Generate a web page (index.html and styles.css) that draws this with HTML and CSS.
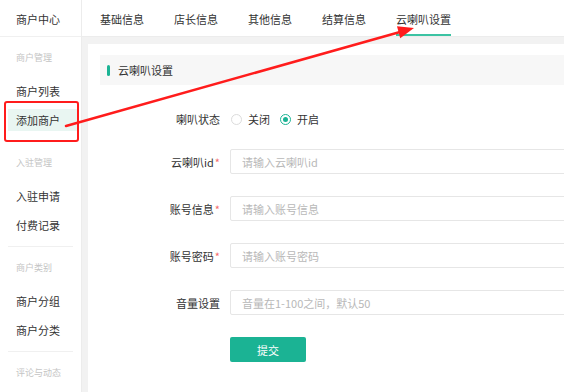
FILE: index.html
```html
<!DOCTYPE html>
<html lang="zh-CN">
<head>
    <meta charset="UTF-8">
    <meta name="viewport" content="width=device-width, initial-scale=1.0">
    <title>云喇叭设置</title>
    <link rel="stylesheet" href="styles.css">
</head>
<body>
    <div class="page">
        <aside class="sidebar">
            <div class="side-head">商户中心</div>

            <div class="side-group">
                <div class="group-title">商户管理</div>
                <a href="#" class="side-item">商户列表</a>
                <a href="#" class="side-item active">添加商户</a>
            </div>

            <div class="side-group">
                <div class="group-title">入驻管理</div>
                <a href="#" class="side-item">入驻申请</a>
                <a href="#" class="side-item">付费记录</a>
            </div>

            <div class="side-group">
                <div class="group-title">商户类别</div>
                <a href="#" class="side-item">商户分组</a>
                <a href="#" class="side-item">商户分类</a>
            </div>

            <div class="side-group last">
                <div class="group-title">评论与动态</div>
            </div>
        </aside>

        <main class="main">
            <nav class="tabs">
                <a href="#" class="tab">基础信息</a>
                <a href="#" class="tab">店长信息</a>
                <a href="#" class="tab">其他信息</a>
                <a href="#" class="tab">结算信息</a>
                <a href="#" class="tab active">云喇叭设置</a>
            </nav>

            <div class="content">
                <div class="card">
                    <div class="section-title">云喇叭设置</div>

                    <form class="form" onsubmit="return false">
                        <div class="form-row radio-row">
                            <label class="form-label">喇叭状态</label>
                            <div class="radios">
                                <label class="radio">
                                    <input type="radio" name="status" value="0">
                                    <span class="radio-dot"></span>
                                    关闭
                                </label>
                                <label class="radio">
                                    <input type="radio" name="status" value="1" checked>
                                    <span class="radio-dot"></span>
                                    开启
                                </label>
                            </div>
                        </div>

                        <div class="form-row">
                            <label class="form-label">云喇叭id<span class="req">*</span></label>
                            <input class="input" type="text" placeholder="请输入云喇叭id">
                        </div>

                        <div class="form-row">
                            <label class="form-label">账号信息<span class="req">*</span></label>
                            <input class="input" type="text" placeholder="请输入账号信息">
                        </div>

                        <div class="form-row">
                            <label class="form-label">账号密码<span class="req">*</span></label>
                            <input class="input" type="text" placeholder="请输入账号密码">
                        </div>

                        <div class="form-row">
                            <label class="form-label">音量设置</label>
                            <input class="input" type="text" placeholder="音量在1-100之间，默认50">
                        </div>

                        <div class="form-row">
                            <span class="form-label"></span>
                            <button class="button" type="submit">提交</button>
                        </div>
                    </form>
                </div>
            </div>
        </main>

        <!-- red annotation drawn over the screenshot -->
        <svg class="annotation" width="564" height="392" viewBox="0 0 564 392">
            <rect x="5" y="102" width="73" height="39" rx="2" fill="none" stroke="#ff1c1c" stroke-width="2"/>
            <line x1="66" y1="126" x2="400" y2="32" stroke="#ff1c1c" stroke-width="2.5" stroke-linecap="round"/>
            <polygon points="414,28 400.2,38.3 397,26.3" fill="#ff1c1c"/>
        </svg>
    </div>
</body>
</html>
```

FILE: styles.css
```css
* {
    margin: 0;
    padding: 0;
    box-sizing: border-box;
}

body {
    font-family: "Noto Sans CJK SC", "Noto Sans", sans-serif;
    font-size: 11px;
    color: #333;
    background: #fff;
    overflow: hidden;
}

a {
    color: inherit;
    text-decoration: none;
}

.page {
    position: relative;
    display: flex;
    width: 564px;
    height: 392px;
    overflow: hidden;
}

/* sidebar */

.sidebar {
    width: 82px;
    flex-shrink: 0;
    background: #fff;
    border-right: 1px solid #ececec;
}

.side-head {
    height: 37px;
    line-height: 38px;
    padding-left: 16px;
    border-bottom: 1px solid #f0f0f0;
}

.side-group {
    margin: 0 8px;
    padding: 11px 0 10px;
    border-bottom: 1px solid #f0f0f0;
}

.side-group.last {
    border-bottom: none;
}

.group-title {
    line-height: 20px;
    padding-left: 8px;
    font-size: 9px;
    color: #c4c4c4;
}

.side-item {
    display: block;
    height: 22px;
    line-height: 22px;
    padding-left: 8px;
    margin-top: 7px;
    margin-right: -5px;
}

.group-title + .side-item {
    margin-top: 12px;
}

.side-item.active {
    background: #e9f6f2;
}

/* main */

.main {
    flex: 1;
    display: flex;
    flex-direction: column;
    min-width: 0;
    background: #f2f2f2;
}

.tabs {
    display: flex;
    gap: 30px;
    height: 37px;
    padding-left: 18px;
    background: #fff;
    border-bottom: 1px solid #ececec;
}

.tab {
    height: 36px;
    line-height: 38px;
    white-space: nowrap;
}

.tab.active {
    box-shadow: inset 0 -2px 0 #3cc3a3;
}

.content {
    flex: 1;
    padding: 7px 0 0 6px;
}

.card {
    height: 100%;
    background: #fff;
    padding: 11px 0 0 12px;
    overflow: hidden;
}

.section-title {
    display: flex;
    align-items: center;
    height: 30px;
    padding-left: 7px;
    background: #f7f7f7;
}

.section-title::before {
    content: "";
    width: 3px;
    height: 11px;
    margin-right: 8px;
    border-radius: 2px;
    background: #1bb394;
}

/* form */

.form {
    padding-top: 22px;
}

.form-row {
    display: flex;
    align-items: center;
    margin-bottom: 22px;
}

.radio-row {
    height: 24px;
    margin-bottom: 18px;
}

.form-label {
    width: 120px;
    flex-shrink: 0;
    margin-right: 10px;
    text-align: right;
    white-space: nowrap;
}

.req {
    color: #f56c6c;
    margin-left: 1px;
}

.radios {
    display: flex;
    padding-left: 1px;
}

.radio {
    display: inline-flex;
    align-items: center;
    gap: 6px;
    margin-right: 10px;
    cursor: pointer;
}

.radio input {
    display: none;
}

.radio-dot {
    width: 11px;
    height: 11px;
    border: 1px solid #dcdcdc;
    border-radius: 50%;
    display: flex;
    align-items: center;
    justify-content: center;
}

.radio input:checked + .radio-dot {
    border-color: #1bb394;
}

.radio input:checked + .radio-dot::after {
    content: "";
    width: 5px;
    height: 5px;
    border-radius: 50%;
    background: #1bb394;
}

.input {
    width: 400px;
    flex-shrink: 0;
    height: 25px;
    padding: 0 11px;
    border: 1px solid #e6e6e6;
    border-radius: 2px;
    font-family: inherit;
    font-size: 11px;
    color: #333;
    outline: none;
}

.input::placeholder {
    color: #b8b8b8;
}

.button {
    width: 76px;
    height: 25px;
    border: none;
    border-radius: 2px;
    background: #1bb394;
    color: #fff;
    font-family: inherit;
    font-size: 11px;
    cursor: pointer;
}

.annotation {
    position: absolute;
    left: 0;
    top: 0;
    pointer-events: none;
}
```
